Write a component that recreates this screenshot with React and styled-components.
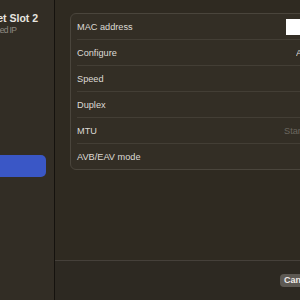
import React from 'react';
import styled, { createGlobalStyle } from 'styled-components';

const Global = createGlobalStyle`
  html, body {
    margin: 0;
    padding: 0;
    background: #2f2a22;
    overflow: hidden;
  }
  body {
    font-family: "Liberation Sans", Arial, sans-serif;
    -webkit-font-smoothing: antialiased;
  }
`;

const Window = styled.div`
  display: flex;
  width: 480px;
  height: 300px;
  margin-left: -96px;
`;

const Sidebar = styled.aside`
  width: 151px;
  flex-shrink: 0;
  background: #322d25;
  border-right: 1px solid #15120e;
  padding: 11px 8px 0 0;
  box-sizing: border-box;
`;

const Header = styled.div`
  padding-left: 60px;
  white-space: nowrap;
`;

const Title = styled.div`
  font-size: 10.5px;
  font-weight: bold;
  color: #e8e5e0;
  line-height: 14px;
`;

const Subtitle = styled.div`
  font-size: 8.6px;
  letter-spacing: -0.7px;
  color: #8d8982;
  line-height: 11px;
`;

const SideItem = styled.div`
  margin-top: 119px;
  height: 22px;
  border-radius: 5px;
  background: ${(p) => (p.$active ? '#3a57c6' : 'transparent')};
`;

const Main = styled.main`
  flex: 1;
  display: flex;
  flex-direction: column;
  background: #2f2a21;
`;

const Content = styled.div`
  flex: 1;
  padding: 13px 16px 0 15px;
`;

const Card = styled.div`
  background: #332e25;
  border: 1px solid #4a453c;
  border-radius: 6px;
  padding-right: 8px;
`;

const Row = styled.div`
  display: flex;
  align-items: center;
  justify-content: space-between;
  height: 25px;
  margin-left: 6px;
  & + & {
    border-top: 1px solid #433e35;
  }
`;

const Label = styled.span`
  font-size: 9.2px;
  color: #dedbd5;
`;

const Value = styled.div`
  width: ${(p) => p.$width}px;
  font-size: 9.2px;
  color: ${(p) => (p.$muted ? '#6b675f' : '#dedbd5')};
  white-space: nowrap;
  overflow: hidden;
`;

const Field = styled.div`
  width: ${(p) => p.$width}px;
  height: 16px;
  background: #ffffff;
`;

const Footer = styled.footer`
  height: 40px;
  flex-shrink: 0;
  border-top: 1px solid #45403a;
  background: #2d2922;
  display: flex;
  align-items: center;
  justify-content: flex-end;
  gap: 8px;
  padding: 0 16px 0 0;
  box-sizing: border-box;
`;

const Button = styled.button`
  height: 13px;
  min-width: 40px;
  padding: 0 4px;
  border: none;
  border-radius: 4px;
  background: #5d5953;
  color: #efece8;
  font-family: inherit;
  font-size: 9px;
  font-weight: bold;
  line-height: 13px;
  text-align: left;
`;

const rows = [
  { label: 'MAC address', field: 73 },
  { label: 'Configure', value: 'Automatically', width: 63 },
  { label: 'Speed' },
  { label: 'Duplex' },
  { label: 'MTU', value: 'Standard (1500)', width: 75, muted: true },
  { label: 'AVB/EAV mode' },
];

export default function App() {
  return (
    <>
      <Global />
      <Window>
        <Sidebar>
          <Header>
            <Title>Ethernet Slot 2</Title>
            <Subtitle>Self-Assigned IP</Subtitle>
          </Header>
          <SideItem $active />
        </Sidebar>
        <Main>
          <Content>
            <Card>
              {rows.map((r) => (
                <Row key={r.label}>
                  <Label>{r.label}</Label>
                  {r.field && <Field $width={r.field} />}
                  {r.value && (
                    <Value $width={r.width} $muted={r.muted}>
                      {r.value}
                    </Value>
                  )}
                </Row>
              ))}
            </Card>
          </Content>
          <Footer>
            <Button>Cancel</Button>
            <Button>OK</Button>
          </Footer>
        </Main>
      </Window>
    </>
  );
}
